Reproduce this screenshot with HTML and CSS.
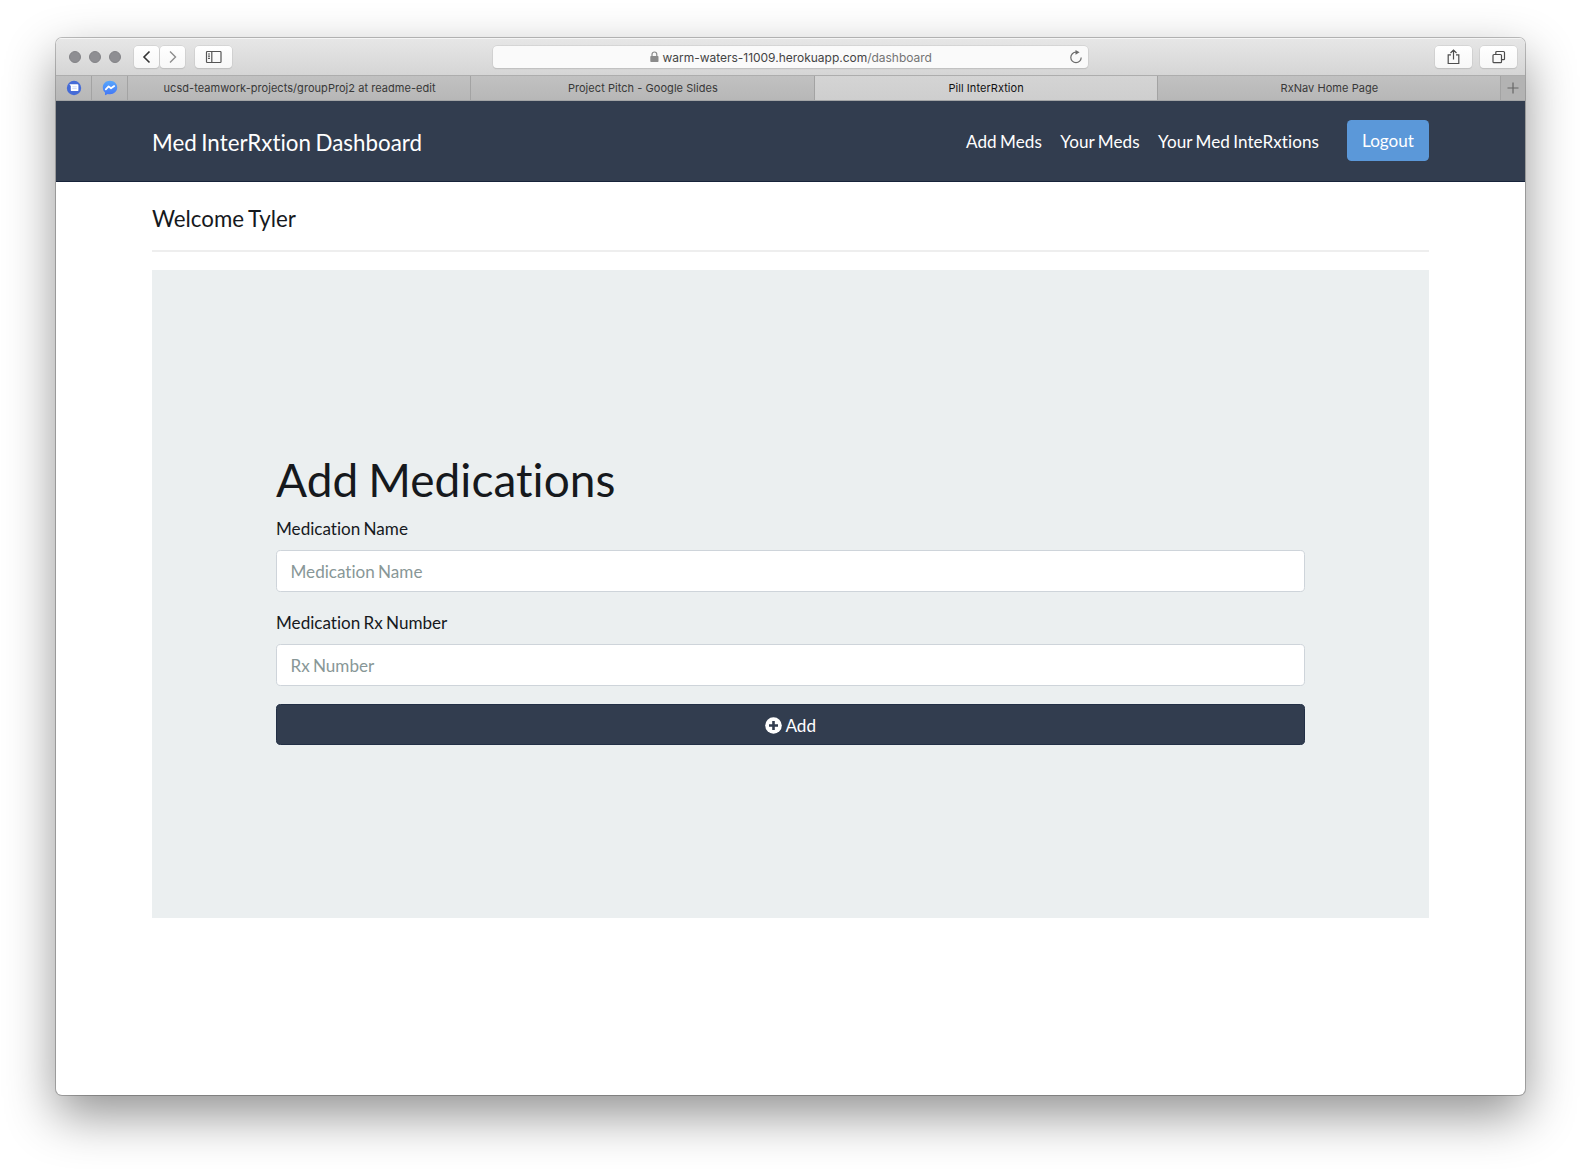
FILE: index.html
```html
<!DOCTYPE html>
<html lang="en">
<head>
<meta charset="utf-8">
<title>Pill InterRxtion</title>
<link rel="stylesheet" href="styles.css">
</head>
<body>
<div class="window">
  <div class="toolbar">
    <div class="lights"><i></i><i></i><i></i></div>
    <div class="history">
      <button class="tool back" aria-label="Back"><svg width="25" height="22" viewBox="0 0 25 22"><path d="M15.500 5.500 10 11l5.500 5.500" fill="none" stroke="#333" stroke-width="1.600"/></svg></button>
      <button class="tool back" aria-label="Forward"><svg width="25" height="22" viewBox="0 0 25 22"><path d="M10 5.500 15.500 11 10 16.500" fill="none" stroke="#8c8c8c" stroke-width="1.400"/></svg></button>
    </div>
    <button class="tool" aria-label="Sidebar"><svg width="37" height="22" viewBox="0 0 37 22"><g fill="none" stroke="#555" stroke-width="1.200"><rect x="11.500" y="5.500" width="14.500" height="11" rx=".8"/><path d="M16.800 5.500v11M13 8h2M13 10.200h2M13 12.400h2"/></g></svg></button>
    <div class="address">
      <svg width="9" height="12" viewBox="0 0 9 12"><rect x=".3" y="5" width="8.200" height="6" rx=".8" fill="#8b8b8b"/><path d="M2 5.500V3.600a2.400 2.600 0 0 1 4.800 0v1.900" fill="none" stroke="#8b8b8b" stroke-width="1.200"/></svg>
      <span class="url">warm-waters-11009.herokuapp.com<span class="path">/dashboard</span></span>
      <svg class="reload" width="14" height="14" viewBox="0 0 14 14"><path d="M7.500 2.200H7A5.200 5.200 0 1 0 12.200 7.400" fill="none" stroke="#6b6b6b" stroke-width="1.200"/><path d="M6.500 0 10.600 2.300 6.500 4.800z" fill="#6b6b6b"/></svg>
    </div>
    <button class="tool share" aria-label="Share"><svg width="37" height="22" viewBox="0 0 37 22"><g fill="none" stroke="#4d4d4d" stroke-width="1.200"><path d="M16 8.800h-2.800v8.700h10.600V8.800H21M18.500 13.500V4M15.500 7l3-3 3 3"/></g></svg></button>
    <button class="tool overview" aria-label="Tabs"><svg width="37" height="22" viewBox="0 0 37 22"><g fill="none" stroke="#4d4d4d" stroke-width="1.200"><rect x="13" y="8.500" width="8.500" height="8.200" rx="1"/><path d="M15.800 8.500V6.500a1 1 0 0 1 1-1H23.500a1 1 0 0 1 1 1v6.200a1 1 0 0 1-1 1h-2"/></g></svg></button>
  </div>
  <div class="tabs">
    <div class="pin"><svg width="16" height="16" viewBox="0 0 16 16"><circle cx="8" cy="8" r="7.200" fill="#456bd7"/><path d="M3.300 4.300h8.200a.9.900 0 0 1 .9.900v5a.9.900 0 0 1-.9.900H5.700a.9.900 0 0 1-.9-.9V6z" fill="#fff"/><path d="M6.300 6.800h4.500M6.300 8.600h4.500" stroke="#c3cff4" stroke-width=".8"/></svg></div>
    <div class="pin"><svg width="16" height="16" viewBox="0 0 16 16"><defs><linearGradient id="m" x2="0" y2="1"><stop stop-color="#58a7fc"/><stop offset="1" stop-color="#4376f5"/></linearGradient></defs><path d="M8 .8c4.100 0 7.200 2.900 7.200 6.700s-3.100 6.700-7.200 6.700c-.8 0-1.500-.1-2.200-.3L3 15.200v-2.600C1.600 11.400.8 9.600.8 7.500.8 3.700 3.900.8 8 .8z" fill="url(#m)"/><path d="m3.800 9.400 2.800-3L9 8.300l3.200-2.200" fill="none" stroke="#fff" stroke-width="1.800" stroke-linejoin="round" stroke-linecap="round"/></svg></div>
    <div class="tab">ucsd-teamwork-projects/groupProj2 at readme-edit</div>
    <div class="tab">Project Pitch - Google Slides</div>
    <div class="tab active">Pill InterRxtion</div>
    <div class="tab">RxNav Home Page</div>
    <div class="plus"><svg width="12" height="12" viewBox="0 0 12 12"><path d="M6 .5v11M.5 6h11" stroke="#666" stroke-width="1.200"/></svg></div>
  </div>
  <nav class="navbar">
    <a class="brand">Med InterRxtion Dashboard</a>
    <div class="links"><a>Add Meds</a><a>Your Meds</a><a>Your Med InteRxtions</a></div>
    <a class="logout">Logout</a>
  </nav>
  <main class="content">
    <h2 class="welcome">Welcome Tyler</h2>
    <section class="card">
      <h1 class="heading">Add Medications</h1>
      <label class="label" for="name">Medication Name</label>
      <input class="field" id="name" placeholder="Medication Name">
      <label class="label" for="rx">Medication Rx Number</label>
      <input class="field" id="rx" placeholder="Rx Number">
      <button class="add"><svg width="17" height="17" viewBox="0 0 17 17"><circle cx="8.500" cy="8.500" r="8.300" fill="#fff"/><path d="M8.500 4v9M4 8.500h9" stroke="#323d4f" stroke-width="2.600"/></svg><span>Add</span></button>
    </section>
  </main>
</div>
</body>
</html>
```
FILE: styles.css
```css
* { box-sizing: border-box; }
body {
  margin: 0;
  height: 1169px;
  padding: 38px 56px 74px;
  background: #fff;
  overflow: hidden;
  font-family: Lato, "Liberation Sans", sans-serif;
  font-size: 17.100px;
  font-variant-ligatures: none;
  word-spacing: -1.150px;
  color: #16191d;
}
button, input { font: inherit; margin: 0; word-spacing: inherit; }
svg { display: block; flex: none; }
.window {
  height: 1057px;
  border-radius: 6px;
  background: #fff;
  box-shadow: 0 0 0 1px rgba(0, 0, 0, .24), 0 20px 50px rgba(0, 0, 0, .43);
  overflow: hidden;
}
.toolbar {
  height: 37px;
  display: flex;
  align-items: center;
  padding: 1px 8px 0 13px;
  background: linear-gradient(#e7e7e7, #d5d5d5);
  box-shadow: inset 0 1px #f5f5f5;
}
.lights { display: flex; gap: 8px; margin-right: 13px; }
.lights i { width: 12px; height: 12px; border-radius: 50%; background: #8e8e92; border: 1px solid #838387; }
.history { display: flex; gap: 1px; margin-right: 10px; }
.tool {
  width: 37px;
  height: 22px;
  padding: 0;
  border: 0;
  border-radius: 4px;
  background: linear-gradient(#fff, #f7f7f7);
  box-shadow: 0 0 0 .5px #c8c8c8, 0 1px 1px #b9b9b9;
}
.back { width: 25px; }
.address {
  width: 595px;
  height: 22px;
  margin-left: 261px;
  padding: 0 5px 0 157px;
  display: flex;
  align-items: center;
  border-radius: 4px;
  background: #fafafa;
  box-shadow: 0 0 0 .5px #c8c8c8, 0 1px 1px #b9b9b9;
  font: 12px/22px Inter, sans-serif;
  letter-spacing: -.02px;
  color: #444;
}
.url { margin-left: 3.500px; white-space: nowrap; padding-top: 1px; }
.path { color: #747474; }
.reload { margin-left: auto; }
.share { margin-left: auto; }
.overview { margin-left: 8px; }
.tabs {
  height: 26px;
  display: flex;
  background: linear-gradient(#c1c1c1, #b7b7b7);
  border-top: 1px solid #adadad;
  border-bottom: 1px solid #a3a5a6;
  font: 400 11px/24px Inter, sans-serif;
  letter-spacing: .05px;
  word-spacing: 0;
  color: #383838;
}
.pin, .tab { border-right: 1px solid #a3a3a3; display: flex; align-items: center; justify-content: center; }
.pin { width: 36px; flex: none; }
.tab { flex: 1; white-space: nowrap; padding-left: 1px; }
.active { background: linear-gradient(#d4d4d4, #cecece); color: #111; }
.plus { width: 24px; display: flex; align-items: center; justify-content: center; background: #b3b3b3; }
.navbar {
  height: 81px;
  padding: 0 96px;
  display: flex;
  align-items: center;
  background: #323d4f;
  border-bottom: 1px solid #17233a;
  color: #fff;
}
.brand { font-size: 22.350px; line-height: 34px; padding-top: 4px; }
.links { margin-left: auto; display: flex; gap: 18.400px; line-height: 26px; padding-top: 2px; letter-spacing: .07px; }
.logout {
  margin: -2px 0 0 28px;
  width: 82px;
  height: 41px;
  line-height: 42px;
  text-align: center;
  border-radius: 4.600px;
  background: #5b98d9;
}
.content { padding: 20px 96px 0; }
.welcome {
  margin: 0 0 18px;
  height: 50px;
  font-size: 22.300px;
  font-weight: 400;
  line-height: 34px;
  border-bottom: 2px solid #eee;
}
.card { height: 648px; padding: 182px 124px 0; background: #ebeff0; display: flex; flex-direction: column; }
.heading { margin: 0; font-size: 46px; font-weight: 400; line-height: 55px; word-spacing: -2px; letter-spacing: .05px; }
.label { line-height: 26px; margin: 9px 0 8px; }
.field {
  height: 42px;
  padding: 0 13.500px;
  border: 1px solid #ced4da;
  border-radius: 4.600px;
  background: #fff;
}
.field + .label { margin-top: 18px; }
.field::placeholder { color: #889797; opacity: 1; }
.add {
  margin-top: 18px;
  height: 41px;
  padding: 1px 0 0;
  display: flex;
  align-items: center;
  justify-content: center;
  gap: 3.500px;
  border: 1px solid #222f45;
  border-radius: 4.600px;
  background: #323d4f;
  color: #fff;
}
```
